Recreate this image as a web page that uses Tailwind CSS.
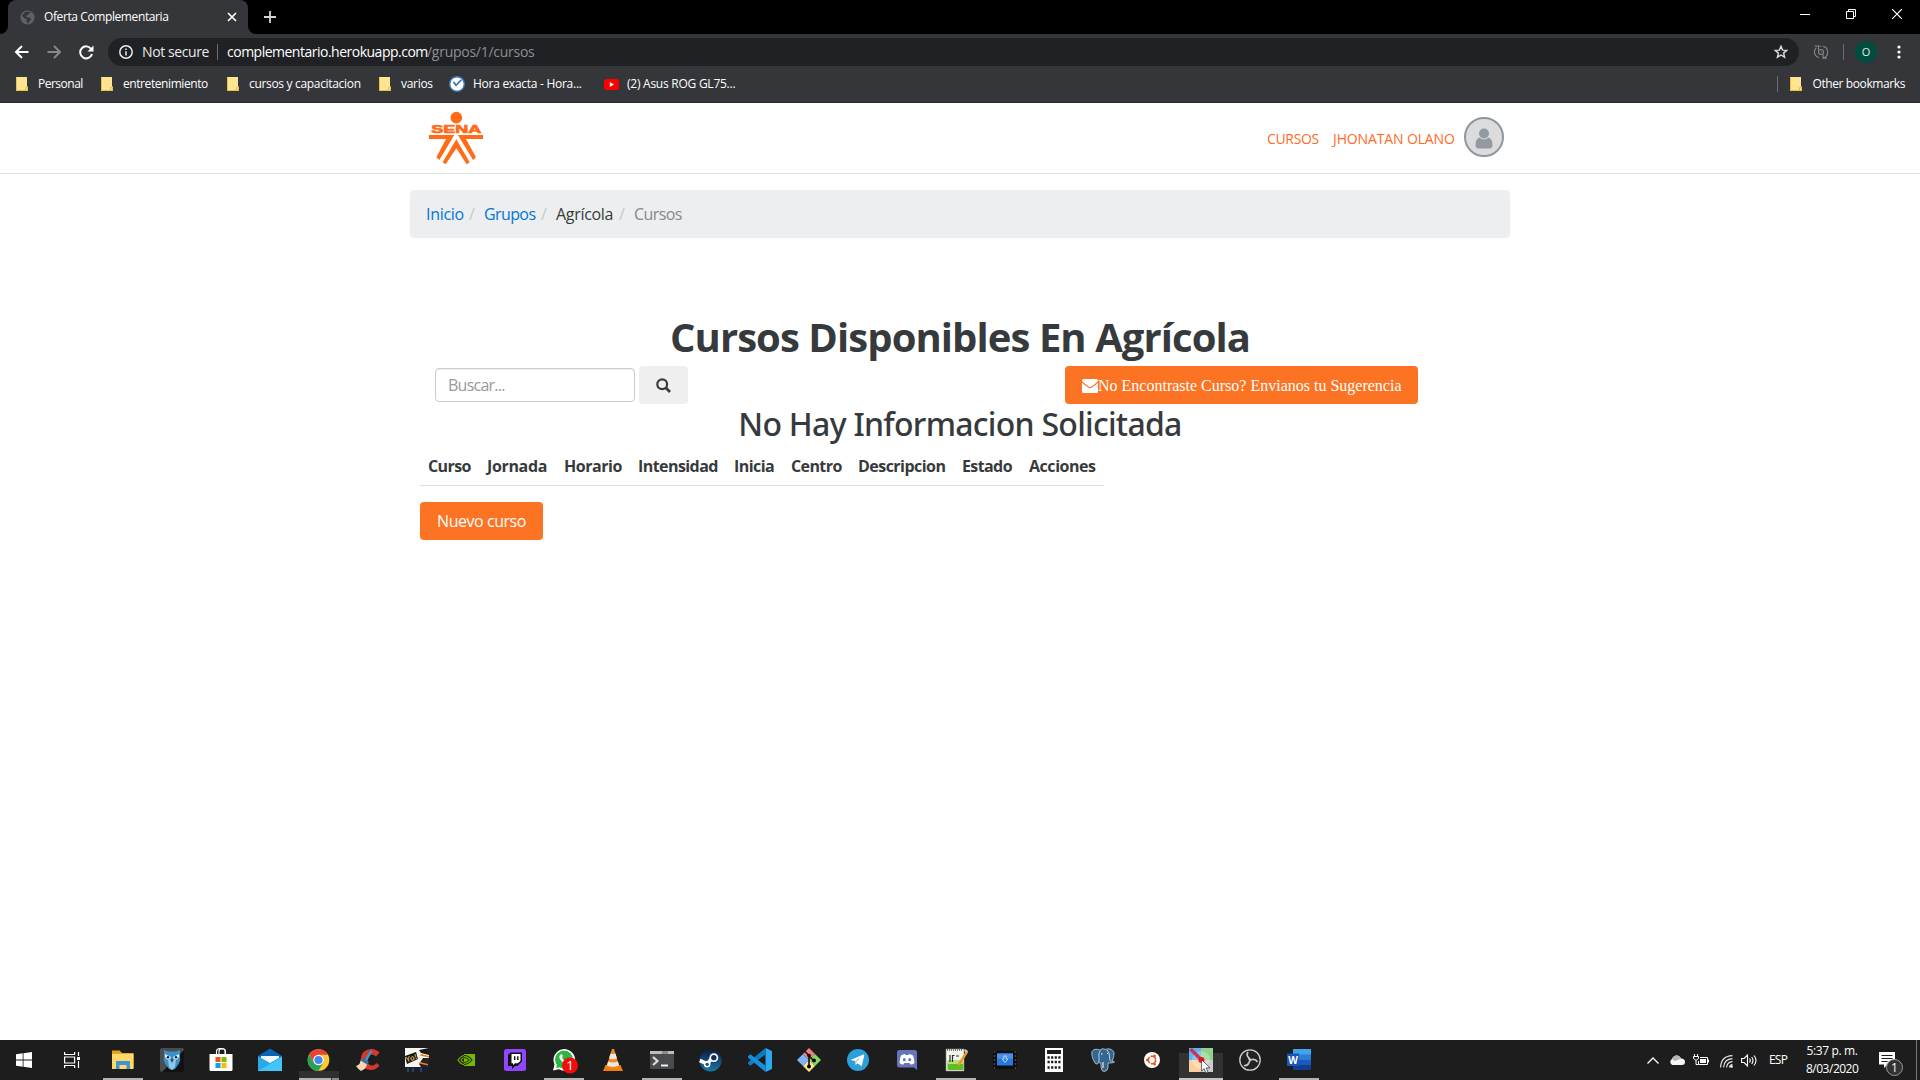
<!DOCTYPE html>
<html lang="es">
<head>
<meta charset="utf-8">
<title>Oferta Complementaria</title>
<script src="https://cdn.jsdelivr.net/npm/@tailwindcss/browser@4"></script>
</head>
<body class="w-[1920px] h-[1080px] overflow-hidden bg-white flex flex-col font-['Open_Sans',sans-serif] text-[#373a3c]">

<!-- Tab strip -->
<div class="h-[34px] shrink-0 bg-black flex justify-between">
  <div class="flex">
    <div class="w-2 flex items-end bg-[#35363a]"><div class="w-2 h-[34px] bg-black rounded-br-lg"></div></div>
    <div class="w-[240px] h-[34px] bg-[#35363a] rounded-t-lg flex items-center pl-3 pr-[10px]">
      <svg class="w-[15px] h-[15px] shrink-0" viewBox="0 0 16 16"><circle cx="8" cy="8" r="7.5" fill="#5f6368"/><path d="M2 6l3 3 2 .5v3l2 2 1-2.500 2-1.500-1-2-4-1-1-1 2-1 2-2 2-1-3-1-4 1z" fill="#35363a"/></svg>
      <span class="ml-[9px] text-xs text-white tracking-[-0.4px] whitespace-nowrap">Oferta Complementaria</span>
      <svg class="w-3 h-3 ml-auto" viewBox="0 0 12 12" fill="none" stroke="#fff" stroke-width="1.700"><path d="M2 2l8 8M10 2l-8 8"/></svg>
    </div>
    <div class="w-2 bg-[#35363a]"><div class="w-2 h-[34px] bg-black rounded-bl-lg"></div></div>
    <svg class="w-3 h-3 mt-[11px] ml-2" viewBox="0 0 12 12" stroke="#d5d6d8" stroke-width="1.800"><path d="M6 0v12M0 6h12"/></svg>
  </div>
  <div class="flex pt-[9px] pr-[18px] gap-9">
    <svg class="w-[10px] h-[10px]" viewBox="0 0 10 10" stroke="#fff"><path d="M0 5.500h10"/></svg>
    <svg class="w-[10px] h-[10px]" viewBox="0 0 10 10" fill="none" stroke="#fff"><path d="M.5 2.500h7v7h-7zM2.500 2.500v-2h7v7h-2"/></svg>
    <svg class="w-[10px] h-[10px]" viewBox="0 0 10 10" stroke="#fff" stroke-width="1.200"><path d="M0 0l10 10M10 0L0 10"/></svg>
  </div>
</div>

<!-- Toolbar -->
<div class="h-9 shrink-0 bg-[#35363a] flex items-center pl-[14px] pr-[19px]">
  <svg class="w-[15px] h-[14px]" viewBox="0 0 15 14" fill="none" stroke="#fff" stroke-width="2"><path d="M14.500 7H2M8 1L2 7l6 6"/></svg>
  <svg class="w-[15px] h-[14px] ml-[18px]" viewBox="0 0 15 14" fill="none" stroke="#85878a" stroke-width="2"><path d="M.5 7H13M7 1l6 6-6 6"/></svg>
  <svg class="w-[15px] h-[15px] ml-[17px]" viewBox="0 0 15 15" fill="none" stroke="#fff" stroke-width="2"><path d="M12.200 4A6 6 0 1 0 13 9"/><path d="M14.500.5v6h-6z" fill="#fff" stroke="none"/></svg>
  <div class="ml-[14px] w-[1691px] h-7 rounded-full bg-[#202124] flex items-center pl-[11px] pr-[11px] text-sm leading-7 whitespace-nowrap">
    <svg class="w-[14px] h-[14px]" viewBox="0 0 14 14" fill="none" stroke="#e8eaed" stroke-width="1.500"><circle cx="7" cy="7" r="6.200"/><path d="M7 6.200v4.300M7 3.400v1.500"/></svg>
    <span class="ml-[9px] w-[75px] text-[#e8eaed] tracking-[-0.4px]">Not secure</span>
    <div class="w-px h-4 bg-[#6b6d70]"></div>
    <span class="ml-[9px] w-[200px] text-white tracking-[-0.5px]">complementario.herokuapp.com</span><span class="text-[#8b8f94] tracking-[-0.27px]">/grupos/1/cursos</span>
    <svg class="w-[14px] h-[14px] ml-auto" viewBox="0 0 14 14" fill="none" stroke="#dadce0" stroke-width="1.400"><path d="M7 1.200l1.600 3.900 4.200.3-3.200 2.700 1 4.100L7 10l-3.600 2.200 1-4.100L1.200 5.400l4.200-.3z"/></svg>
  </div>
  <svg class="w-[14px] h-[14px] ml-[15px]" viewBox="0 0 14 14" fill="none" stroke="#85878a" stroke-width="1.100"><path d="M2.300 2.600A6 6 0 0 0 5 12.700M9 13A6 6 0 0 0 9 1.300M.5 1h4v4M13 13.200H9v-4M5.500 1.200h2"/><circle cx="7" cy="7" r="2.500"/><path d="M6.500 7h1"/></svg>
  <div class="ml-[15px] w-px h-4 bg-[#6b6d70]"></div>
  <div class="ml-[11px] w-[22px] h-[22px] rounded-full bg-[#004d40] text-[#e0e8e6] text-[11px] flex items-center justify-center">O</div>
  <svg class="w-1 h-[14px] ml-auto" viewBox="0 0 4 14" fill="#fff"><circle cx="2" cy="2" r="1.600"/><circle cx="2" cy="7" r="1.600"/><circle cx="2" cy="12" r="1.600"/></svg>
</div>

<!-- Bookmarks bar -->
<div class="h-[33px] shrink-0 bg-[#35363a] border-b border-[#28292c] flex items-center pb-1 pl-4 pr-[15px] text-xs text-white whitespace-nowrap">
  <svg class="w-3 h-[14px] mr-[10px]" viewBox="0 0 12 14"><path d="M0 0h11v9.500h1V14H0z" fill="#ffe591"/><path d="M9.500 13.500v-3h2v3zM.5.5v13h9" fill="none" stroke="#e5c04b"/></svg>
  <span class="w-[63px] tracking-[-0.5px]">Personal</span>
  <svg class="w-3 h-[14px] mr-[10px]" viewBox="0 0 12 14"><path d="M0 0h11v9.500h1V14H0z" fill="#ffe591"/><path d="M9.500 13.500v-3h2v3zM.5.5v13h9" fill="none" stroke="#e5c04b"/></svg>
  <span class="w-[104px] tracking-[-0.42px]">entretenimiento</span>
  <svg class="w-3 h-[14px] mr-[10px]" viewBox="0 0 12 14"><path d="M0 0h11v9.500h1V14H0z" fill="#ffe591"/><path d="M9.500 13.500v-3h2v3zM.5.5v13h9" fill="none" stroke="#e5c04b"/></svg>
  <span class="w-[130px] tracking-[-0.32px]">cursos y capacitacion</span>
  <svg class="w-3 h-[14px] mr-[10px]" viewBox="0 0 12 14"><path d="M0 0h11v9.500h1V14H0z" fill="#ffe591"/><path d="M9.500 13.500v-3h2v3zM.5.5v13h9" fill="none" stroke="#e5c04b"/></svg>
  <span class="w-[48px] tracking-[-0.3px]">varios</span>
  <svg class="w-4 h-4 mr-2" viewBox="0 0 16 16"><circle cx="8" cy="8" r="7.300" fill="#fff" stroke="#3d78bd" stroke-width="1.400"/><path d="M4.500 6L7 9.200l5.500-5.400" fill="none" stroke="#2b6cc0" stroke-width="1.600"/></svg>
  <span class="w-[131px] tracking-[-0.27px]">Hora exacta - Hora...</span>
  <svg class="w-[15px] h-[11px] mr-2" viewBox="0 0 15 11"><rect width="15" height="11" rx="2.500" fill="#f00"/><path d="M5.800 3l4.200 2.500L5.800 8z" fill="#fff"/></svg>
  <span class="tracking-[-0.25px]">(2) Asus ROG GL75...</span>
  <div class="ml-auto w-px h-4 bg-[#6b6d70]"></div>
  <svg class="w-3 h-[14px] ml-3 mr-[10px]" viewBox="0 0 12 14"><path d="M0 0h11v9.500h1V14H0z" fill="#ffe591"/><path d="M9.500 13.500v-3h2v3zM.5.5v13h9" fill="none" stroke="#e5c04b"/></svg>
  <span class="tracking-[-0.4px]">Other bookmarks</span>
</div>

<!-- Site header -->
<header class="h-[71px] shrink-0 border-b border-[#dee0e2]">
  <div class="w-[1100px] h-full mx-auto flex items-start justify-between pl-[19px] pr-[6px]">
    <svg class="w-[54px] h-[54px] mt-2" viewBox="87 33 162 162" fill="#ff6b17"><circle cx="169" cy="53" r="17.500"/><text x="94" y="99" font-family="Liberation Sans, sans-serif" font-weight="700" font-size="33" textLength="150" lengthAdjust="spacingAndGlyphs" stroke="#ff6b17" stroke-width="2">SENA</text><path d="M87 105h76l-45 75-9-8 29-55H87zM249 105h-75l45 75 9-8-30-55h51zM169 118l40 69-9 6-31-48-32 48-9-6z"/></svg>
    <nav class="flex items-center mt-[14px] text-sm text-[#ff6b26] whitespace-nowrap">
      <span class="w-[66px] mt-[3px] tracking-[-0.33px]">CURSOS</span>
      <span class="w-[131px] mt-[3px] tracking-[-0.13px]">JHONATAN OLANO</span>
      <div class="w-10 h-10 rounded-full border-2 border-[#8d979f] bg-[#dcdcdc] flex justify-center pt-[9px]">
        <svg class="w-[18px] h-[21px]" viewBox="0 0 18 21" fill="#929aa4"><circle cx="9" cy="5.500" r="5"/><path d="M4.500 9.500Q9 13.500 13.500 9.500 17.500 10.500 17.500 17.500 17.500 20.500 14.500 20.500h-11Q.5 20.500.5 17.500.5 10.500 4.500 9.500z"/></svg>
      </div>
    </nav>
  </div>
</header>

<main class="w-[1100px] mx-auto flex-1 pt-4">
  <ol class="h-12 bg-[#eceeef] rounded flex items-center pl-4 text-base whitespace-nowrap">
    <li class="w-[43px] text-[#0275d8] tracking-[-0.3px]">Inicio</li><li class="w-[15px] text-[#c8cacc]">/</li>
    <li class="w-[57px] text-[#0275d8] tracking-[-0.6px]">Grupos</li><li class="w-[15px] text-[#c8cacc]">/</li>
    <li class="w-[63px] tracking-[-0.3px]">Agrícola</li><li class="w-[15px] text-[#c8cacc]">/</li>
    <li class="text-[#818a91] tracking-[-0.6px]">Cursos</li>
  </ol>

  <h1 class="mt-[75px] h-[53px] leading-[48px] text-center text-[40px] font-bold tracking-[-0.93px]">Cursos Disponibles En Agrícola</h1>

  <div class="flex items-center pl-[25px]">
    <div class="w-[200px] h-[34px] border border-[#ccc] rounded flex items-center pl-3 text-base text-[#999] tracking-[-0.75px] shadow-[inset_0_1px_1px_rgba(0,0,0,0.075)]">Buscar...</div>
    <button class="ml-1 w-[49px] h-[38px] rounded bg-[#efefef] flex items-center justify-center">
      <svg class="w-[15px] h-[15px]" viewBox="0 0 15 15" fill="none" stroke="#373a3c" stroke-width="2.200"><circle cx="6.200" cy="6.200" r="4.900"/><path d="M9.800 9.800l4.200 4.200" stroke-width="2.700"/></svg>
    </button>
    <a class="ml-[377px] w-[353px] h-[38px] rounded bg-[#fc7323] text-white flex items-center pl-[17px] pt-px text-base font-['Liberation_Serif',serif] whitespace-nowrap">
      <svg class="w-4 h-[14px]" viewBox="0 0 16 14"><path d="M1.500 0h13Q16 0 16 1.800q-.5 1-2 2.200L9.500 7.500q-1.500 1-3 0L2 4Q.3 2.800 0 1.800 0 0 1.500 0zM0 4l6 4.600q2 1.200 4 0L16 4v8.500q0 1.500-1.500 1.500h-13Q0 14 0 12.500z" fill="#fff"/></svg><span>No Encontraste Curso? Envianos tu Sugerencia</span>
    </a>
  </div>

  <h2 class="h-[43px] leading-[40px] text-center text-[32px] font-medium font-['Noto_Sans',sans-serif] tracking-[-0.73px]">No Hay Informacion Solicitada</h2>

  <div class="ml-[10px] w-[684px] h-[39px] border-b border-[#dcdddf] flex items-center pl-2 pb-px text-base font-bold whitespace-nowrap">
    <span class="w-[59px] tracking-[-0.6px]">Curso</span>
    <span class="w-[77px] tracking-[-0.35px]">Jornada</span>
    <span class="w-[74px] tracking-[-0.45px]">Horario</span>
    <span class="w-[96px] tracking-[-0.57px]">Intensidad</span>
    <span class="w-[57px] tracking-[-0.55px]">Inicia</span>
    <span class="w-[67px] tracking-[-0.6px]">Centro</span>
    <span class="w-[104px] tracking-[-0.53px]">Descripcion</span>
    <span class="w-[67px] tracking-[-0.6px]">Estado</span>
    <span class="tracking-[-0.45px]">Acciones</span>
  </div>
  <button class="mt-4 ml-[10px] w-[123px] h-[38px] rounded bg-[#fc7323] text-white text-base tracking-[-0.45px] flex items-center justify-center">Nuevo curso</button>
</main>

<!-- Taskbar -->
<footer class="h-10 shrink-0 bg-[#1d1d1d] flex justify-between">
  <div class="grid grid-cols-[repeat(27,49px)] h-10">
    <div class="flex items-center pl-4"><svg class="w-4 h-4" viewBox="0 0 16 16" fill="#fff"><path d="M0 2.300L6.700 1.300V7.600H0zM7.500 1.200L16 0V7.600H7.500zM0 8.400H6.700V14.700L0 13.700zM7.500 8.400H16V16L7.500 14.800z"/></svg></div>
    <div class="flex items-center pl-[15px]"><svg class="w-4 h-4" viewBox="0 0 16 16" fill="none" stroke="#fff" stroke-width="1.200"><path d="M.6 0v2.500h10V0M.6 5h10v6H.6zM.6 16v-2.500h10V16M14.500 0v4M14.500 9v7"/><path d="M13 5h3v3h-3z" fill="#fff" stroke="none"/></svg></div>
    <div class="flex flex-col items-center pt-2"><svg class="w-6 h-6" viewBox="0 0 24 24"><path d="M1 3h8l2 2h11.500v15H1z" fill="#e5a823"/><path d="M1 6h21.500v15H1z" fill="#ffd868"/><path d="M5 21v-7q0-1 1-1h12q1 0 1 1v7h-3.500v-4h-7v4z" fill="#3d94d8"/><path d="M1 2.500h8V5H1z" fill="#e79d16"/></svg><div class="mt-1.5 w-10 h-0.5 bg-[#b4b4b4]"></div></div>
    <div class="flex items-center justify-center"><svg class="w-6 h-6" viewBox="0 0 24 24"><rect width="24" height="24" rx="2" fill="#111"/><path d="M0 2q0-2 2-2h20q2 0 2 2L2 24q-2 0-2-2z" fill="#4b4e50"/><path d="M4 2l4 1.500h8L20 2v7q1 3-1 6.500L15 21l-3 1-3-1-4-5.500q-2-3.500-1-6.500z" fill="#3c8fc9"/><path d="M8 12h8l-1 7-3 3-3-3z" fill="#8cc7e8"/><path d="M5 6l6 3-1 2.500H7L5 9zM19 6l-6 3 1 2.500h3L19 9z" fill="#d8ecf8"/><circle cx="8" cy="9.300" r="1.200" fill="#123"/><circle cx="16" cy="9.300" r="1.200" fill="#123"/><path d="M12 10l-1.300 2.500L12 15l1.300-2.500z" fill="#234f75"/></svg></div>
    <div class="flex items-center justify-center"><svg class="w-6 h-6" viewBox="0 0 24 24"><path d="M7.500 7V3.500q0-3 4.500-3t4.500 3V7M10 6V3q0-2 3-2t3 2v3" fill="none" stroke="#fff" stroke-width="1.100"/><path d="M.5 6h23v15.500q0 1.500-1.500 1.500H2q-1.500 0-1.500-1.500z" fill="#fff"/><path d="M6.500 9h5v5h-5z" fill="#f25022"/><path d="M12.500 9h5v5h-5z" fill="#7fba00"/><path d="M6.500 15h5v5h-5z" fill="#00a4ef"/><path d="M12.500 15h5v5h-5z" fill="#ffb900"/></svg></div>
    <div class="flex items-center justify-center"><svg class="w-6 h-6" viewBox="0 0 24 24"><path d="M0 8l12-7.500L24 8v6H0z" fill="#0b63b5"/><path d="M3 8h18v6l-9 4-9-4z" fill="#f4f6f9"/><path d="M0 8l12 7L24 8v15H0z" fill="#29a9ea"/><path d="M0 23L24 9v14z" fill="#42c5f7"/></svg></div>
    <div class="flex flex-col items-center pt-2 bg-[linear-gradient(#303030,#303030)] bg-no-repeat bg-[size:40px_9px] bg-[position:5px_31px]"><svg class="w-[23px] h-6" viewBox="0 0 24 24"><circle cx="12" cy="12" r="11.300" fill="#fcc934"/><path d="M2.200 6.300A11.300 11.300 0 0 1 21.800 6.400H12L7.100 14.800z" fill="#e84435"/><path d="M2.200 6.400L7.100 14.900 12 17.600 16.800 15 12 23.300A11.300 11.300 0 0 1 2.200 6.400z" fill="#25a159"/><circle cx="12" cy="12" r="5.500" fill="#fff"/><circle cx="12" cy="12" r="4.300" fill="#4688f1"/></svg><div class="mt-1.5 w-10 h-0.5 flex gap-px"><div class="flex-1 bg-[#b4b4b4]"></div><div class="w-[7px] bg-[#8d8d8d]"></div></div></div>
    <div class="flex items-center justify-center"><svg class="w-6 h-6" viewBox="0 0 24 24"><path d="M23.500 4.500L20 8.500q-2-2-4.500-2-3.500 0-4 5-.3 5 3.500 6 3.500.5 5.500-2.500l3 2.500Q20 22 15 22 5 21.500 4.500 12 5 1.500 15 1q5-.3 8.500 3.500z" fill="#d2392d"/><path d="M14.500 2l2 1-5.500 10-2-1.500z" fill="#2d9ddd"/><path d="M7 10l6 4-2 2-6-3.500z" fill="#2178bd"/><path d="M4.500 12.500l6.500 4Q10 21 5 23q-3-2-5-5 4-1 4.500-5.500z" fill="#f0d9b3"/></svg></div>
    <div class="flex items-center justify-center"><svg class="w-6 h-6" viewBox="0 0 24 24"><path d="M0 0h24v24H0z" fill="#f6f5f2"/><path d="M0 19h24v5H0z" fill="#172031"/><path d="M0 8l11-4 2 7-11 5z" fill="#171614"/><text x="1" y="13.500" font-size="7.500" font-weight="700" fill="#d9aa56" transform="rotate(-18 4 12)" font-family="Liberation Sans, sans-serif">Yo!</text><path d="M14 2l10-2v7l-8-2z" fill="#1b1614"/><path d="M16 6l8 2v1.500l-9-2z" fill="#e57b17"/><path d="M18 10h6v9h-8l-2-3z" fill="#262221"/><path d="M15 14l8 2v1.500l-9-2z" fill="#e0842c"/><path d="M3 20v4M8 20v4M16 20v4" stroke="#58616e"/></svg></div>
    <div class="flex items-center justify-center"><svg class="w-[18px] h-3" viewBox="0 0 18 12"><path d="M7 0h11v12H7z" fill="#76b900"/><path d="M1 6q3-4.500 7-4.500T15 6q-3 4-7 4.500T1 6zM4 6q1.500-2.500 4-2.500T12 6q-1.500 2.300-4 2.500T4 6z" fill="none" stroke="#76b900" stroke-width="1.200"/><path d="M7 1.500Q12 1.500 15 6q-3 4-8 4.500M7 3.500q3 0 5 2.500-2 2.500-5 2.500" fill="none" stroke="#1d2d08" stroke-width="1.100"/></svg></div>
    <div class="flex items-center justify-center"><svg class="w-[22px] h-[22px]" viewBox="0 0 22 22"><rect width="22" height="22" rx="2.500" fill="#9146ff"/><path d="M6.500 3.500H18v9L13.500 17H11l-3 3v-3H4V6z" fill="#111"/><path d="M7.500 5H16.500v6.800L14 14.200h-3L9 16v-1.800H7.500z" fill="#fff"/><path d="M10.700 7.300V11M13.800 7.300V11" stroke="#111" stroke-width="1.400"/></svg></div>
    <div class="flex flex-col items-center pt-2 pl-0.5"><svg class="w-[26px] h-[26px] -mb-0.5" viewBox="0 0 26 26"><path d="M1 22.500l1.500-6A10.800 10.800 0 1 1 7 21.300z" fill="#fff"/><circle cx="12" cy="11.500" r="9" fill="#2cb742"/><path d="M4 20l1.500-5 3.500 4z" fill="#2cb742"/><path d="M8 7q2-2 3 1l-1 1.500q1 3 4 4l1.500-1q3 1 1.500 3-3 2-7-2-4-3.500-2-6.500z" fill="#fff"/><circle cx="18" cy="17.500" r="8" fill="#f20d0d"/><text x="18" y="22.300" text-anchor="middle" font-family="Open Sans, sans-serif" font-size="13.500" fill="#fff">1</text></svg><div class="mt-1.5 mr-0.5 w-10 h-0.5 bg-[#b4b4b4]"></div></div>
    <div class="flex items-center justify-center"><svg class="w-6 h-6" viewBox="0 0 24 24"><path d="M4.500 17h15l2.500 6H2z" fill="#ef7e10"/><path d="M11 1h2l5.500 18q-6.500 3-13 0z" fill="#f58b17"/><path d="M9.500 5.500l-1.500 5q4 1.500 8 0l-1.500-5q-2.500 1-5 0zM7 13.500L5.900 17.500q6 2.500 12.200 0L17 13.500q-5 2-10 0z" fill="#e9e9e9"/></svg></div>
    <div class="flex flex-col items-center pt-2"><svg class="w-6 h-6" viewBox="0 0 24 24"><rect y="3" width="24" height="18" rx="1" fill="#4a4b4d"/><path d="M0 3h24v3H0z" fill="#bdbdbd"/><path d="M12 3h6v3h-6z" fill="#8d8d8d"/><path d="M3 9l4.500 4L3 17" fill="none" stroke="#ddd" stroke-width="2.200"/><path d="M11 17.500h7" stroke="#eee" stroke-width="2"/></svg><div class="mt-1.5 w-10 h-0.5 bg-[#b4b4b4]"></div></div>
    <div class="flex items-center justify-center"><svg class="w-[23px] h-[23px]" viewBox="0 0 24 24"><defs><linearGradient id="st" x2="0" y2="1"><stop stop-color="#0d1c43"/><stop offset="1" stop-color="#1679a9"/></linearGradient></defs><circle cx="12" cy="12" r="11.500" fill="url(#st)"/><path d="M.8 12l8 3.500L13 10" fill="none" stroke="#fff" stroke-width="3.800"/><circle cx="8.500" cy="16" r="3.400" fill="#fff"/><circle cx="8.500" cy="16" r="1.700" fill="#1b4e7c"/><circle cx="15.500" cy="9" r="3.700" fill="#142c57" stroke="#fff" stroke-width="1.800"/></svg></div>
    <div class="flex items-center justify-center"><svg class="w-6 h-6" viewBox="0 0 24 24"><path d="M17.500 0L24 3v18l-6.500 3z" fill="#2ba8ee"/><path d="M17.500 0v6.500L2.300 17.800 0 15.800v-1.300z" fill="#0d7cc5"/><path d="M17.500 24v-6.500L2.300 6.200 0 8.200v1.300z" fill="#1590dc"/></svg></div>
    <div class="flex items-center justify-center"><svg class="w-6 h-6" viewBox="0 0 24 24"><path d="M12 0l6 6-6 6-6-6z" fill="#f28080"/><path d="M6 6l6 6-6 6-6-6z" fill="#7bb5fb"/><path d="M18 6l6 6-6 6-6-6z" fill="#87d766"/><path d="M12 12l6 6-6 6-6-6z" fill="#fde58a"/><path d="M8 3.500l4 4v11M12 8l5 5" fill="none" stroke="#1c1c1c" stroke-width="1.700"/><circle cx="12" cy="7.500" r="1.800"/><circle cx="12" cy="18.500" r="2"/><circle cx="17" cy="12.500" r="1.900"/></svg></div>
    <div class="flex items-center justify-center"><svg class="w-[22px] h-[22px]" viewBox="0 0 22 22"><circle cx="11" cy="11" r="11" fill="#2ba0da"/><path d="M3.500 11l13-5.500q1-.3.700.8l-2.200 10q-.3 1-1.200.4l-3.300-2.400-1.800 1.700-.8-4z" fill="#fff"/><path d="M7.900 12l6.500-4.500-4.900 5.500-.8 3z" fill="#a9cde3"/></svg></div>
    <div class="flex items-center justify-center"><svg class="w-5 h-5" viewBox="0 0 20 20"><path d="M2.500 0h15Q20 0 20 2.500V20l-3-2.500H2.500Q0 17.500 0 15V2.500Q0 0 2.500 0z" fill="#6674b9"/><path d="M4 5.500Q6 4 8 4l.5 1h3L12 4q2 0 4 1.500Q17.500 9 17.500 13q-1.500 1.500-4 1.500l-1-1.500h-5l-1 1.500q-2.500 0-4-1.500Q2.500 9 4 5.500z" fill="#fff"/><ellipse cx="7.300" cy="9.700" rx="1.400" ry="1.600" fill="#6674b9"/><ellipse cx="12.700" cy="9.700" rx="1.400" ry="1.600" fill="#6674b9"/></svg></div>
    <div class="flex flex-col items-center pt-2"><svg class="w-6 h-6" viewBox="0 0 24 24"><path d="M2 1h18v22H2z" fill="#f4f4f0" stroke="#888" stroke-width=".6"/><path d="M3.500 14h16v8h-16z" fill="#5fbf22"/><path d="M3.500 12h16v4h-16z" fill="#b4e078"/><path d="M3 2h16" stroke="#555" stroke-width="1.500" stroke-dasharray="1 1"/><path d="M6 7v7M8.500 7v7M8.500 7.500h2M12 8h3" fill="none" stroke="#26331b" stroke-width="1.200"/><path d="M22 3l2 1.500-7.500 12-3 2 .7-3.500z" fill="#e89c27"/><path d="M21 1l3 2-1 2-3-2z" fill="#ccc"/></svg><div class="mt-1.5 w-10 h-0.5 bg-[#b4b4b4]"></div></div>
    <div class="flex items-center justify-center"><svg class="w-6 h-[18px]" viewBox="0 0 24 18"><path d="M0 0h24v18H0z" fill="#0e0e0e"/><path d="M1.500 0v18M22.500 0v18" stroke="#444" stroke-width="1.500" stroke-dasharray="2 2"/><path d="M4 2.500h16v12H4z" fill="#2778df"/><path d="M4 2.500h16v5H4z" fill="#4a92e9"/><path d="M11 5h2v3h1.800L12 11.500 9.200 8H11z" fill="#2778df" stroke="#d8eaff" stroke-width=".8"/></svg></div>
    <div class="flex items-center justify-center"><svg class="w-[18px] h-6" viewBox="0 0 18 24"><path d="M0 0h18v24H0z" fill="#fff"/><path d="M2 2h14v4H2z" fill="#1d1d1d"/><path d="M2.500 9.500h13M2.500 14h13M2.500 19.500h13" stroke="#1d1d1d" stroke-width="2.300" stroke-dasharray="2.200 1.400"/></svg></div>
    <div class="flex items-center justify-center"><svg class="w-6 h-6" viewBox="0 0 24 24"><path d="M9 2Q3 0 1 3.500 0 8 4 15q2 2.500 4-.5l2 .5v4q.5 4.500 3 4.500 3.500 0 4-4V15h1.500q3 .2 5-1-1-.8-2.500-.7Q23.500 8 23 4.500 20.500-.5 14.500 1.300 11-.2 9 2z" fill="#336791" stroke="#c4d0da" stroke-width=".8"/><path d="M9.500 2.500Q7 5 8 9.500q.5 3-.5 4.500M16 2q3 3 2.500 7-.5 3 1.500 4.500" fill="none" stroke="#dce7ef" stroke-width=".8"/><path d="M10 6h1.500M16 5.500h1M12 14v6" stroke="#fff"/></svg></div>
    <div class="flex items-center justify-center"><svg class="w-4 h-4" viewBox="0 0 16 16"><circle cx="8" cy="8" r="8" fill="#fff"/><circle cx="8" cy="8" r="3.700" fill="none" stroke="#e2531f" stroke-width="1.600" stroke-dasharray="6.750 1"/><circle cx="3.200" cy="8" r="1.300" fill="#e2531f"/><circle cx="10.600" cy="3.800" r="1.300" fill="#e2531f"/><circle cx="10.600" cy="12.200" r="1.300" fill="#e2531f"/></svg></div>
    <div class="relative flex flex-col items-center pt-2 bg-[linear-gradient(#323232,#323232)] bg-no-repeat bg-[size:44px_27px] bg-[position:3px_13px]"><svg class="w-6 h-6" viewBox="0 0 24 24"><path d="M0 0h12v12H0z" fill="#64aff2"/><path d="M12 0h12v12H12z" fill="#8fd38f"/><path d="M0 12h12v12H0z" fill="#fbcf9d"/><path d="M12 12h12v12H12z" fill="#ccc"/><circle cx="12" cy="12" r="9" fill="#fff" opacity=".25"/><path d="M0 2l3-2 10 10-2 3z" fill="#c23b55"/><circle cx="12.500" cy="12" r="3" fill="#f50d17"/></svg><div class="mt-1.5 w-11 h-0.5 bg-[#c4c4c4]"></div>
      <svg class="absolute left-[25px] top-[19px] w-[10px] h-[15px]" viewBox="0 0 12 18"><path d="M.5.500v14l3.200-3 2.200 5.300 2.400-1-2.200-5.100h4.600z" fill="#fff" stroke="#222" stroke-width=".8"/></svg></div>
    <div class="flex items-center justify-center"><svg class="w-[22px] h-[22px]" viewBox="0 0 22 22" fill="none"><circle cx="11" cy="11" r="10.200" fill="#222" stroke="#cfcfcf" stroke-width="1.300"/><path d="M9 3q-2 3 .5 5.500Q11.500 10 11 12M18.500 13q-2-3.500-5.500-2.500-2 1-3.500-1M5 16.500q4 .5 5-3 .3-2 2.500-3" stroke="#c8c8c8" stroke-width="1.700"/></svg></div>
    <div class="flex flex-col items-center pt-2"><svg class="w-6 h-6" viewBox="0 0 24 24"><path d="M6 1h18v6H6z" fill="#41a5ee"/><path d="M6 6.500h18V12H6z" fill="#2b7cd3"/><path d="M6 12h18v5.500H6z" fill="#185abd"/><path d="M6 17.500h18v4.500H6z" fill="#103f91"/><path d="M0 5.500h12v12.500H0z" fill="#1b55b8"/><text x="6" y="15.500" text-anchor="middle" font-family="Open Sans, sans-serif" font-weight="700" font-size="10" fill="#fff">W</text></svg><div class="mt-1.5 w-10 h-0.5 bg-[#b4b4b4]"></div></div>
  </div>

  <!-- System tray -->
  <div class="flex items-center text-white text-xs whitespace-nowrap">
    <svg class="w-3 h-[7px]" viewBox="0 0 12 7" fill="none" stroke="#fff" stroke-width="1.300"><path d="M.5 6.500L6 1l5.500 5.500"/></svg>
    <svg class="w-4 h-[10px] ml-[10px]" viewBox="0 0 16 10"><path d="M3.500 10A3.300 3.300 0 0 1 3 4Q4.500 0 8.500.5 11 1 12 3.500q4 .3 4 3.500 0 3-3 3z" fill="#f5f5f5"/><path d="M3 4Q4.500 0 8.500.5 11 1 12 3.500L6 6z" fill="#b5b5b5"/></svg>
    <svg class="w-4 h-3 ml-2" viewBox="0 0 16 12" fill="none" stroke="#fff"><path d="M1.500 0v2M4.500 0v2M.5 2.500h5v2l-2 1.500h-1L.5 4.500zM3 6v4.500h2M7 3.500h7.500v7H5.500V7M15.500 5.500v3"/><path d="M7 5h6v4H7z" fill="#fff" stroke="none"/></svg>
    <svg class="w-[13px] h-[13px] ml-[11px] mt-0.5" viewBox="0 0 13 13" fill="none" stroke="#e8e8e8" stroke-width="1.100"><path d="M.6 12.500Q1 1 12.500.6M3.600 12.500Q4 4 12.500 3.600M6.600 12.500Q7 7 12.500 6.600M9.500 12.500Q9.800 9.800 12.500 9.500"/><circle cx="11.500" cy="11.500" r="1.300" fill="#fff" stroke="none"/></svg>
    <svg class="w-4 h-[13px] ml-2" viewBox="0 0 16 13" fill="none" stroke="#fff" stroke-width="1.100"><path d="M.6 4.500h2.500L6.500 1v11L3.100 8.500H.6zM8.500 4.500q1.500 2 0 4M10.700 3q2.500 3.500 0 7M13 1.500q4 5 0 10"/></svg>
    <span class="ml-3 w-[37px] tracking-[-0.8px]">ESP</span>
    <div class="w-[52px] text-center leading-[18px]"><div class="tracking-[-0.35px]">5:37 p. m.</div><div class="tracking-[-0.5px]">8/03/2020</div></div>
    <div class="relative ml-[21px] w-[37px] h-10"><svg class="absolute left-0 top-3 w-4 h-4" viewBox="0 0 16 16"><path d="M0 0h16v12.500H8.500L5 16v-3.500H0z" fill="#fff"/><path d="M2.500 3.500h11M2.500 6.500h11M2.500 9.500h6" stroke="#1d1d1d"/></svg>
      <div class="absolute left-[7px] top-[19px] w-[17px] h-[17px] rounded-full border border-[#999] bg-[#333] text-xs leading-[15px] text-center">1</div></div>
    <div class="w-px h-10 bg-[#777] mr-[3px]"></div>
  </div>
</footer>
</body>
</html>
